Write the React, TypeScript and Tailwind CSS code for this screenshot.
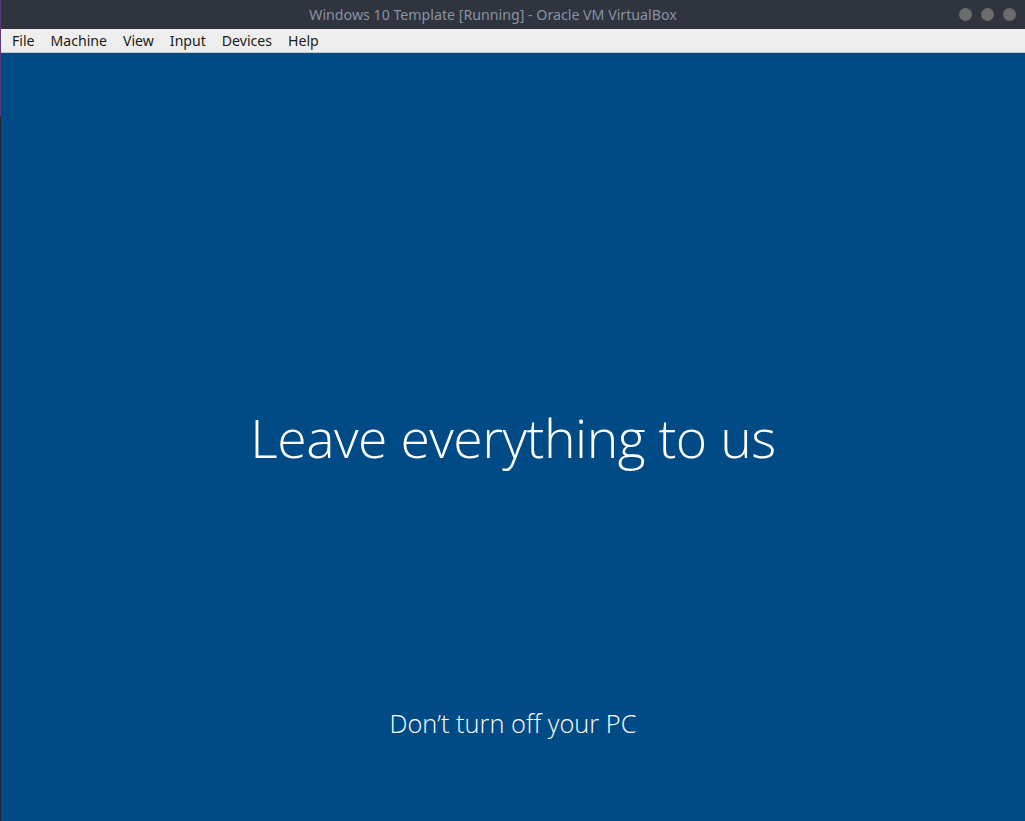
import React from "react";

export default function App() {
  const menu = ["File", "Machine", "View", "Input", "Devices", "Help"];
  return (
    <div className="flex h-[821px] w-[1025px] overflow-hidden bg-[#2b2e38]">
      <div className="flex w-[1px] flex-col">
        <div className="h-[116px] bg-[#5a3a78]" />
        <div className="flex-1 bg-[#26272c]" />
      </div>
      <div className="flex flex-1 flex-col">
        <div className="relative flex h-[29px] items-center justify-center bg-[#2f343f] pr-[40px]">
          <span
            className="text-[14.2px] text-[#8893a5]"
            style={{ fontFamily: '"Noto Sans", sans-serif' }}
          >
            Windows 10 Template [Running] - Oracle VM VirtualBox
          </span>
          <div className="absolute right-[9px] top-[8px] flex gap-[9px]">
            <div className="h-[13px] w-[13px] rounded-full bg-[#6c6c6c]" />
            <div className="h-[13px] w-[13px] rounded-full bg-[#6c6c6c]" />
            <div className="h-[13px] w-[13px] rounded-full bg-[#6c6c6c]" />
          </div>
        </div>
        <div
          className="flex h-[24px] items-center gap-[16px] border-b border-[#c8c8c8] bg-[#eeeeee] pl-[11px] text-[14.1px] text-[#1a1a1a]"
          style={{ fontFamily: '"Noto Sans", sans-serif' }}
        >
          {menu.map((m) => (
            <span key={m}>{m}</span>
          ))}
        </div>
        <div
          className="flex flex-1 flex-col items-center bg-[#004b85] text-white"
          style={{ fontFamily: '"Open Sans", "Noto Sans", sans-serif' }}
        >
          <div className="mt-[358px] text-[53.5px] font-light leading-none tracking-[-0.5px]">
            Leave everything to us
          </div>
          <div className="mt-[246px] text-[25.4px] font-light leading-none">
            Don’t turn off your PC
          </div>
        </div>
      </div>
    </div>
  );
}
